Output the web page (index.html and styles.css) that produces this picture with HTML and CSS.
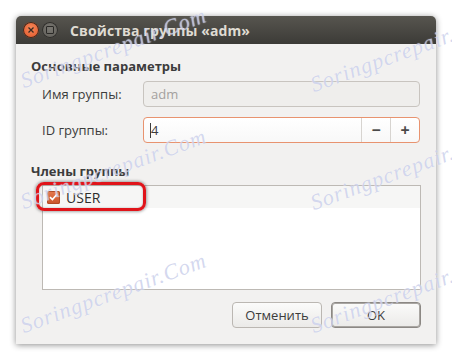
FILE: index.html
```html
<!DOCTYPE html>
<html lang="ru">
<head>
<meta charset="utf-8">
<link rel="stylesheet" href="styles.css">
</head>
<body>
<div class="stage">
<div class="window">
  <div class="titlebar">
    <span class="btn-close"><svg width="8" height="8" viewBox="0 0 8 8"><path d="M1.5 1.5L6.5 6.5M6.5 1.5L1.5 6.5" stroke="#3a2a22" stroke-width="1.3"/></svg></span>
    <span class="btn-min"><span class="sq"></span></span>
    <span class="title">Свойства группы «adm»</span>
  </div>
  <div class="content">
    <div class="heading">Основные параметры</div>
    <div class="form">
      <label class="lbl">Имя группы:</label>
      <div class="entry disabled">adm</div>
      <label class="lbl">ID группы:</label>
      <div class="spin">
        <div class="spin-val"><span class="caret"></span>4</div>
        <div class="spin-btn">−</div>
        <div class="spin-btn">+</div>
      </div>
    </div>
    <div class="heading h2">Члены группы</div>
    <div class="list">
      <div class="row">
        <span class="check"><svg width="9" height="8" viewBox="0 0 9 8"><path d="M1 4.2L3.4 6.5L8 1.2" fill="none" stroke="#fff" stroke-width="1.7"/></svg></span>
        <span class="uname">USER</span>
      </div>
    </div>
    <div class="actions">
      <button class="btn">Отменить</button>
      <button class="btn default">OK</button>
    </div>
  </div>
  <div class="hl"></div>
</div>
<div class="mark" style="left:25px;top:70px">Soringpcrepair.Com</div>
<div class="mark" style="left:315px;top:74px">Soringpcrepair.Com</div>
<div class="mark" style="left:25px;top:191px">Soringpcrepair.Com</div>
<div class="mark" style="left:315px;top:192px">Soringpcrepair.Com</div>
<div class="mark" style="left:25px;top:315px">Soringpcrepair.Com</div>
<div class="mark" style="left:315px;top:315px">Soringpcrepair.Com</div>
</div>
</body>
</html>
```
FILE: styles.css
```css
html, body { margin: 0; padding: 0; background: #fff; overflow: hidden; }
body { font-family: "Open Sans", "DejaVu Sans", sans-serif; }
.stage { position: relative; width: 452px; height: 360px; overflow: hidden; padding-top: 16px; box-sizing: border-box; }

.window {
  position: relative;
  margin: 0 0 0 16px;
  width: 420px;
  height: 328px;
  background: #f2f1f0;
  border-radius: 5px 5px 0 0;
  box-shadow: 0 1px 6px rgba(0,0,0,0.45);
  display: flex;
  flex-direction: column;
}

.titlebar {
  height: 28px;
  background: linear-gradient(#57554f, #3c3b37);
  border-radius: 5px 5px 0 0;
  display: flex;
  align-items: center;
  padding-left: 7px;
  flex: none;
}
.btn-close {
  width: 16px; height: 16px; border-radius: 50%;
  background: radial-gradient(circle at 50% 40%, #f58a5c, #df4f22);
  box-shadow: 0 0 0 1px #3a2a22 inset;
  display: flex; align-items: center; justify-content: center;
}
.btn-min {
  width: 16px; height: 16px; border-radius: 50%;
  margin-left: 3px;
  background: radial-gradient(circle at 50% 40%, #7a7872, #5c5a55);
  box-shadow: 0 0 0 1px #2f2e2b inset;
  display: flex; align-items: center; justify-content: center;
}
.btn-min .sq { width: 6px; height: 6px; border: 1px solid #2a2927; border-radius: 1px; }
.title {
  margin-left: 12px;
  color: #dfdbd2;
  font-weight: 700;
  font-size: 14px;
  letter-spacing: 0.1px;
}

.content {
  flex: 1;
  padding: 13px 15px 14px 15px;
  display: flex;
  flex-direction: column;
}
.heading {
  font-weight: 700;
  font-size: 13px;
  line-height: 18px;
  color: #3c3c3c;
}
.h2 { margin-top: 19px; }

.form {
  margin-top: 6px;
  display: grid;
  grid-template-columns: 101px 277px;
  row-gap: 10px;
  padding-left: 11px;
  align-items: center;
}
.lbl { font-size: 13px; color: #3c3c3c; }
.entry {
  height: 24px;
  border: 1px solid #c8c4bf;
  border-radius: 4px;
  font-size: 13px;
  line-height: 24px;
  padding-left: 7px;
}
.entry.disabled { background: #efeeec; color: #a3a19e; }

.spin {
  height: 24px;
  border: 1px solid #e8936f;
  border-radius: 4px;
  display: flex;
  background: linear-gradient(#fff, #f8f8f8);
  overflow: hidden;
}
.spin-val {
  flex: 1;
  font-size: 13px;
  line-height: 24px;
  padding-left: 6px;
  color: #3c3c3c;
  display: flex; align-items: center;
}
.caret { width: 1px; height: 15px; background: #3c3c3c; }
.spin-btn {
  width: 28px;
  border-left: 1px solid #d7d4d0;
  text-align: center;
  font-size: 16px;
  font-weight: 700;
  line-height: 24px;
  color: #4a4a4a;
}

.list {
  margin-top: 5px;
  margin-left: 11px;
  width: 377px;
  height: 103px;
  border: 1px solid #bdb9b4;
  background: #fff;
}
.row {
  height: 22px;
  background: #f6f6f5;
  display: flex;
  align-items: center;
  padding-left: 4px;
}
.check {
  width: 13px; height: 13px; border-radius: 2px;
  background: linear-gradient(#e57a4f, #c9532a);
  box-shadow: 0 0 0 1px #b24a24 inset;
  display: flex; align-items: center; justify-content: center;
}
.uname { margin-left: 6px; font-size: 14px; color: #2e2e2e; }

.actions {
  margin-top: 12px;
  display: flex;
  justify-content: flex-end;
  gap: 9px;
}
.btn {
  width: 90px; height: 26px;
  font-family: inherit;
  font-size: 13px;
  color: #3c3c3c;
  border: 1px solid #bbb7b2;
  border-radius: 4px;
  background: linear-gradient(#fbfbfa, #ebeae8);
  padding: 0;
}
.btn.default { border: 1px solid #8c8884; box-shadow: 0 0 0 1px #a9a6a2 inset; }

.hl {
  position: absolute;
  left: 20px; top: 166px;
  width: 104px; height: 23px;
  border: 3px solid #e0141a;
  border-radius: 8px;
  box-shadow: 0 0 3px 1px rgba(0,0,0,0.35), inset 0 0 2px rgba(0,0,0,0.3);
}

.mark {
  position: absolute;
  font-family: "Liberation Serif", serif;
  font-style: italic;
  font-size: 22px;
  line-height: 22px;
  color: rgba(175, 183, 225, 0.55);
  text-shadow: 0 0 1px rgba(255,255,255,0.8);
  transform: rotate(-20deg);
  transform-origin: left bottom;
  white-space: nowrap;
  letter-spacing: 1px;
  pointer-events: none;
}
```
